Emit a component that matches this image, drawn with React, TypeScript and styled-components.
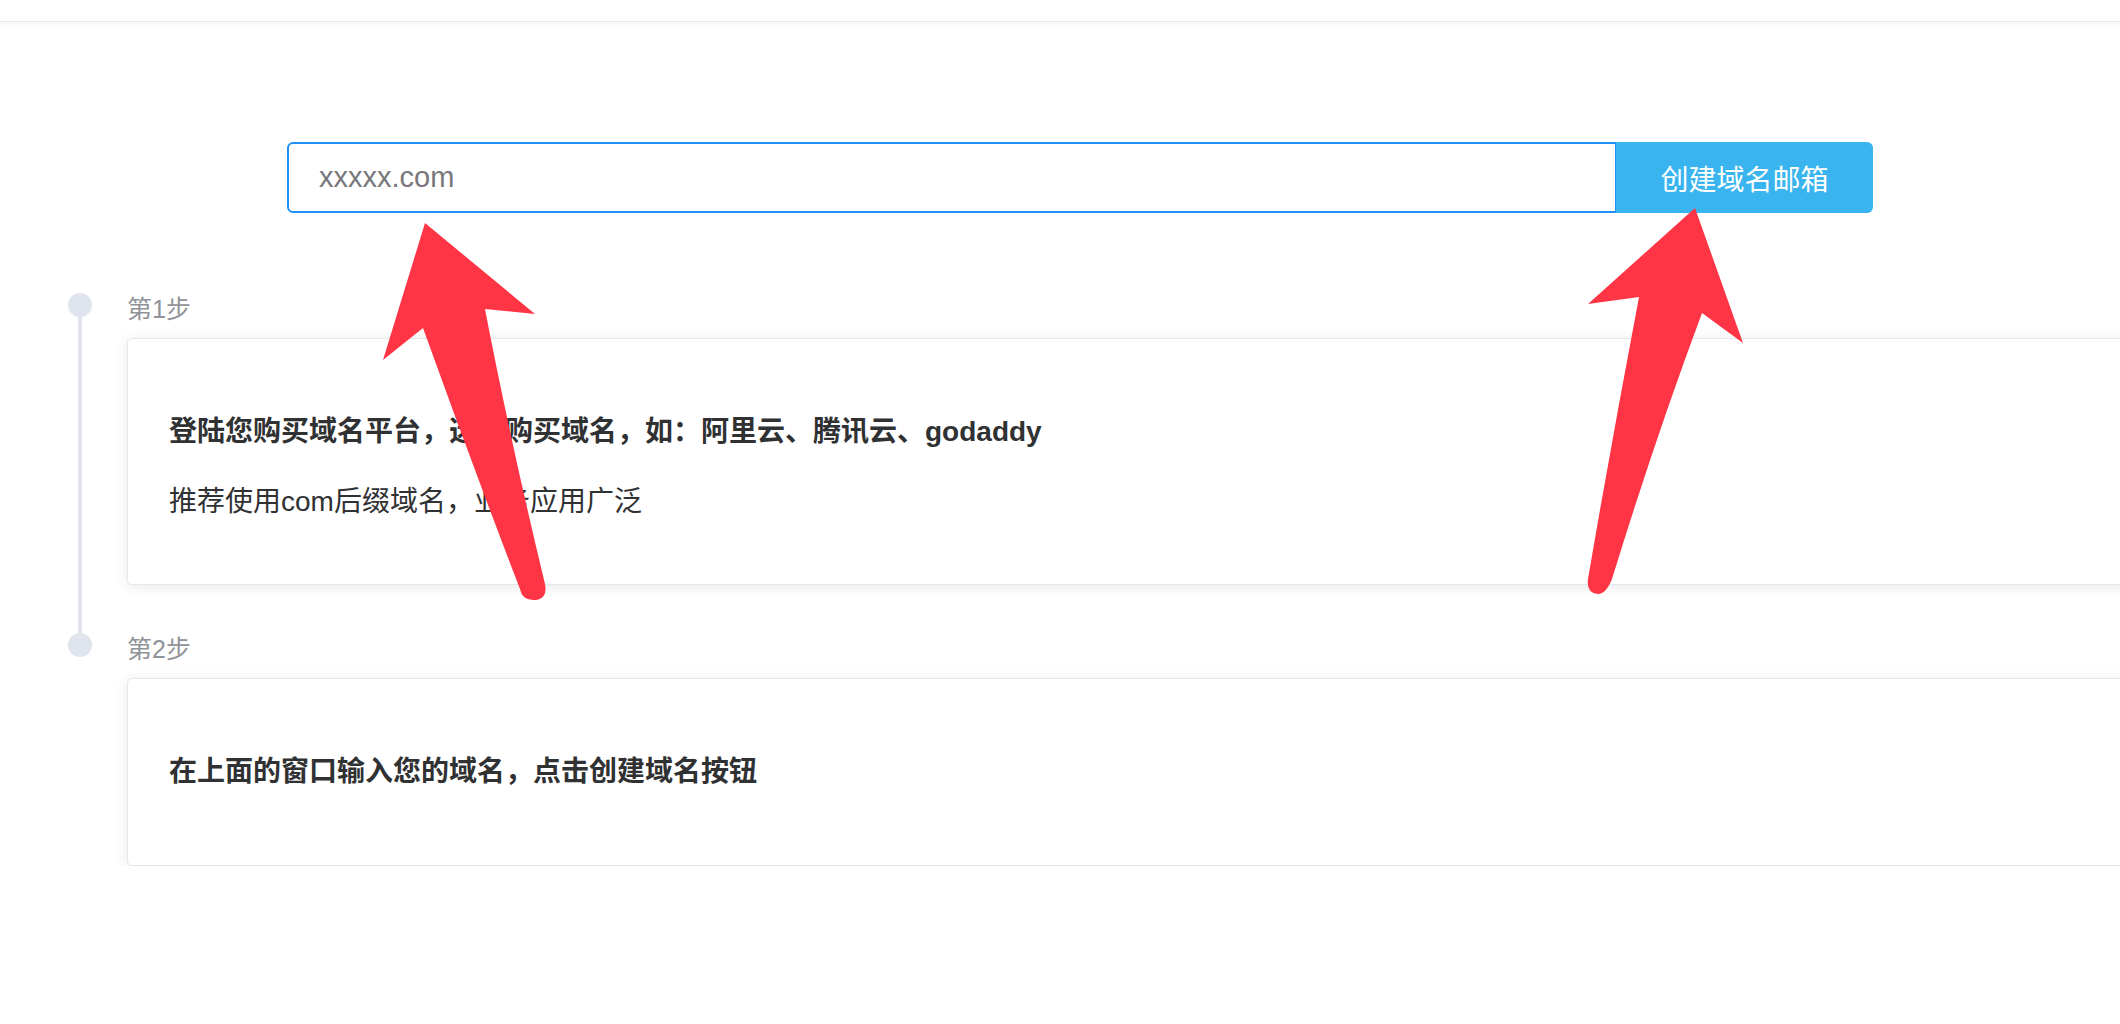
import styled, { createGlobalStyle } from "styled-components";

const GlobalStyle = createGlobalStyle`
	html, body {
		margin: 0;
		padding: 0;
		background: #fff;
		overflow: hidden;
	}
	body {
		font-family: "Liberation Sans", "Noto Sans CJK SC", sans-serif;
		color: #303133;
	}
	* {
		box-sizing: border-box;
	}
`;

const steps = [
	{
		label: "第1步",
		title: "登陆您购买域名平台，选择购买域名，如：阿里云、腾讯云、godaddy",
		desc: "推荐使用com后缀域名，业务应用广泛",
	},
	{
		label: "第2步",
		title: "在上面的窗口输入您的域名，点击创建域名按钮",
	},
];

function App() {
	return (
		<>
			<GlobalStyle />
			<TopBar />
			<Page>
				<SearchRow>
					<DomainInput placeholder="xxxxx.com" />
					<CreateButton>创建域名邮箱</CreateButton>
				</SearchRow>
				<Timeline>
					{steps.map((step, i) => (
						<Item key={step.label} $last={i === steps.length - 1}>
							<Rail>
								<Dot />
								{i < steps.length - 1 && <Tail />}
							</Rail>
							<Content>
								<Stamp>{step.label}</Stamp>
								<Card>
									<Title $last={!step.desc}>{step.title}</Title>
									{step.desc && <Desc>{step.desc}</Desc>}
								</Card>
							</Content>
						</Item>
					))}
				</Timeline>
				<Arrows />
			</Page>
		</>
	);
}

// hand drawn red arrows pasted over the screenshot
function Arrows() {
	return (
		<ArrowLayer width="2160" height="1024" viewBox="0 0 2160 1024">
			<path
				d="M425,224 L535,315 L485,310 Q510,440 545,585 Q548,601 533,601 Q522,601 520,590 Q470,460 423,329 L383,361 Z"
				fill="#ff3444"
			/>
			<path
				d="M1695,209 L1743,344 L1702,314 Q1655,440 1612,580 Q1606,595 1598,595 Q1586,594 1588,580 Q1612,440 1639,298 L1588,305 Z"
				fill="#ff3444"
			/>
		</ArrowLayer>
	);
}

export default App;

const TopBar = styled.div`
	height: 22px;
	background: #fff;
	border-bottom: 1px solid #e6eaea;
	box-shadow: 0 2px 8px rgba(0, 0, 0, 0.05);
	position: relative;
	z-index: 1;
`;

const Page = styled.div`
	position: relative;
	width: 2160px;
	padding: 120px 0 0 68px;
`;

const SearchRow = styled.div`
	display: flex;
	justify-content: center;
	margin-left: -68px;
	height: 71px;
`;

const DomainInput = styled.input`
	width: 1329px;
	height: 71px;
	border: 2px solid #1e8ff5;
	border-right-width: 1px;
	border-radius: 6px 0 0 6px;
	padding: 0 0 0 30px;
	font-family: "Liberation Sans", "Noto Sans CJK SC", sans-serif;
	font-size: 29px;
	color: #303133;
	outline: none;

	&::placeholder {
		color: #77777c;
	}
`;

const CreateButton = styled.button`
	width: 257px;
	height: 71px;
	border: none;
	border-radius: 0 6px 6px 0;
	background: #3ab4ef;
	color: #fff;
	font-family: "Liberation Sans", "Noto Sans CJK SC", sans-serif;
	font-size: 28px;
	cursor: pointer;
`;

const Timeline = styled.ul`
	list-style: none;
	margin: 80px 0 0;
	padding: 0;
`;

const Item = styled.li<{ $last?: boolean }>`
	display: flex;
	gap: 35px;
	padding-bottom: ${(p) => (p.$last ? "0" : "48px")};
`;

const Rail = styled.div`
	display: flex;
	flex-direction: column;
	align-items: center;
	width: 24px;
	margin-bottom: -48px;
`;

const Dot = styled.div`
	width: 24px;
	height: 24px;
	border-radius: 50%;
	background: #dfe4ed;
	flex-shrink: 0;
`;

const Tail = styled.div`
	flex: 1;
	width: 4px;
	background: #dfe4ed;
`;

const Content = styled.div`
	flex: 1;
`;

const Stamp = styled.div`
	font-family: "Liberation Sans", "Noto Sans CJK SC", sans-serif;
	font-size: 25px;
	line-height: 24px;
	padding-top: 4px;
	color: #909399;
	margin-bottom: 17px;
`;

const Card = styled.div`
	width: 2040px;
	background: #fff;
	border: 1px solid #e4e7ed;
	border-radius: 5px;
	box-shadow: 0 2px 14px 0 rgba(0, 0, 0, 0.09);
	padding: 27px 41px;
`;

const Title = styled.h4<{ $last?: boolean }>`
	margin: 46px 0 ${(p) => (p.$last ? "46px" : "30px")};
	font-size: 28px;
	line-height: 40px;
	font-weight: 700;
	color: #303133;
`;

const Desc = styled.p`
	margin: 0 0 35px;
	font-size: 28px;
	line-height: 40px;
	color: #303133;
`;

const ArrowLayer = styled.svg`
	position: absolute;
	top: -23px;
	left: 0;
	pointer-events: none;
`;
